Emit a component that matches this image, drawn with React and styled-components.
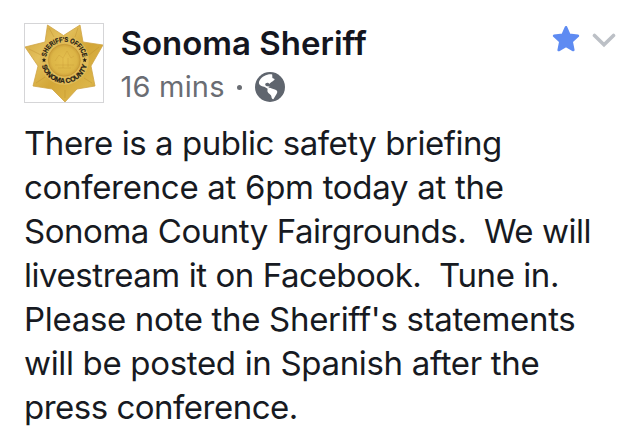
import styled, { createGlobalStyle } from "styled-components";

const lines = [
    { text: "There is a public safety briefing", spacing: -0.46 },
    { text: "conference at 6pm today at the", spacing: -0.3 },
    { text: "Sonoma County Fairgrounds.  We will", spacing: -0.46 },
    { text: "livestream it on Facebook.  Tune in.", spacing: -0.44 },
    { text: "Please note the Sheriff's statements", spacing: -0.32 },
    { text: "will be posted in Spanish after the", spacing: -0.33 },
    { text: "press conference.", spacing: -0.5 },
];

function SheriffBadge() {
    return (
        <svg width="78" height="78" viewBox="1 1 78 78">
            <defs>
                <linearGradient id="gold" x1="0" y1="0" x2="1" y2="1">
                    <stop offset="0" stopColor="#cfa23a" />
                    <stop offset="0.3" stopColor="#e3c05c" />
                    <stop offset="0.55" stopColor="#d3a637" />
                    <stop offset="0.8" stopColor="#dcb548" />
                    <stop offset="1" stopColor="#b98725" />
                </linearGradient>
                <radialGradient id="seal">
                    <stop offset="0" stopColor="#e5c04f" />
                    <stop offset="0.8" stopColor="#dcb546" />
                    <stop offset="1" stopColor="#cda03a" />
                </radialGradient>
                <path id="topArc" d="M21.7 37.5 A18.6 18.6 0 0 1 58.9 37.5" />
                <path id="bottomArc" d="M17.2 37 A23.1 23.1 0 0 0 63.4 37" />
            </defs>
            <path
                d="M23.5 2 L39.5 12.5 L56 2 L59 19 L79 22 L67 43 L71 63 L53 66 L41 79 L28 66 L9 63 L14 43 L1 24 L21 19 Z"
                fill="url(#gold)"
                stroke="#cfa446"
                strokeWidth="0.8"
                strokeLinejoin="round"
            />
            <path
                d="M25 5 L30 14 M54 5 L51 14 M75 24 L65 32 M68 60 L60 55 M41 75 L41 67 M12 60 L21 54 M5 26 L17 32"
                stroke="#b98a2c"
                strokeWidth="0.7"
                opacity="0.5"
            />
            <circle cx="40.3" cy="37.3" r="24.5" fill="#dfba58" />
            <circle cx="40.3" cy="37.3" r="16" fill="url(#seal)" stroke="#c4962f" strokeWidth="0.7" />
            <path
                d="M31 38 L35 32 L39 35 L43 28 L47 35 L50 33 M31 42 H50 M34 45 H47 M39 35 V45 M44 35 V44"
                fill="none"
                stroke="#bd8c2c"
                strokeWidth="0.8"
                opacity="0.3"
            />
            <BadgeText>
                <textPath href="#topArc" startOffset="3.5" textLength="51.5" lengthAdjust="spacingAndGlyphs">SHERIFF'S OFFICE</textPath>
            </BadgeText>
            <BadgeText>
                <textPath href="#bottomArc" startOffset="5.5" textLength="61.5" lengthAdjust="spacing">SONOMA COUNTY</textPath>
            </BadgeText>
            <path
                d="M20 34.6 L20.6 36.3 L22.3 36.4 L21 37.5 L21.4 39.2 L20 38.2 L18.6 39.2 L19 37.5 L17.7 36.4 L19.4 36.3 Z M60.7 34.6 L61.3 36.3 L63 36.4 L61.7 37.5 L62.1 39.2 L60.7 38.2 L59.3 39.2 L59.7 37.5 L58.4 36.4 L60.1 36.3 Z"
                fill="#1f1b14"
            />
        </svg>
    );
}

function GlobeIcon() {
    return (
        <svg width="30" height="30" viewBox="0 0 30 30">
            <circle cx="15" cy="15" r="15" fill="#5f656e" />
            <path
                d="M17.2 2.4 C12 1.8 7.2 4.3 4.6 8.4 C3.5 10.2 3.8 12 5.2 13.2 C6.8 14.6 9 14.3 10.6 15.4 L12.6 16.7 C13.6 15.4 15.5 15.8 16.8 16.5 L20.5 17.8 C22.6 18.6 22.7 20.2 21.7 21.8 L18.4 27.3 C17 27.4 16.5 25.8 16.4 24.5 C16.2 22.2 12.5 21.8 12.4 18.8 L12.6 16.7 L14.7 14.4 L11.9 14.3 C10.3 13.9 9.6 12.3 10.8 11.3 C12 10.3 13.6 10.6 14.4 12 C15.4 9.8 19.8 8.8 19.6 6.9 L17.4 6.1 Z"
                fill="#ffffff"
            />
        </svg>
    );
}

export default function App() {
    return (
        <>
            <GlobalStyle />
            <Post>
                <Header>
                    <Avatar>
                        <SheriffBadge />
                    </Avatar>
                    <HeaderText>
                        <Name>Sonoma Sheriff</Name>
                        <Meta>
                            <Time>16 mins</Time>
                            <Dot />
                            <GlobeIcon />
                        </Meta>
                    </HeaderText>
                    <Actions>
                        <svg width="28" height="28" viewBox="0 0 28 28">
                            <path
                                d="M14 2.3 L17.3 9.8 L25.9 10.8 L19.6 16.5 L21.3 25 L14 20.9 L6.7 25 L8.4 16.5 L2.1 10.8 L10.7 9.8 Z"
                                fill="#5e8bf2"
                                stroke="#5e8bf2"
                                strokeWidth="2.6"
                                strokeLinejoin="round"
                            />
                        </svg>
                        <svg width="24" height="15" viewBox="0 0 24 15">
                            <path d="M2.5 2.5 L12 11.7 L21.5 2.5" fill="none" stroke="#bcc0c6" strokeWidth="3.6" strokeLinecap="round" />
                        </svg>
                    </Actions>
                </Header>
                <Message>
                    {lines.map(({ text, spacing }) => (
                        <Line key={text} $spacing={spacing}>{text}</Line>
                    ))}
                </Message>
            </Post>
        </>
    );
}

const GlobalStyle = createGlobalStyle`
    body {
        margin: 0;
        background-color: #ffffff;
        font-family: Inter, "Liberation Sans", sans-serif;
    }
    svg {
        display: block;
        flex-shrink: 0;
    }
`
const Post = styled.article`
    box-sizing: border-box;
    width: 639px;
    height: 436px;
    padding: 23px 23px 0 24px;
    overflow: hidden;
`
const Header = styled.header`
    display: flex;
    height: 80px;
`
const Avatar = styled.div`
    box-sizing: border-box;
    width: 80px;
    height: 80px;
    border: 1px solid #d5d5d7;
`
const BadgeText = styled.text`
    font-family: "Liberation Sans", sans-serif;
    font-size: 7px;
    font-weight: 700;
    fill: #1f1b14;
    stroke: #1f1b14;
    stroke-width: 0.2px;
`
const HeaderText = styled.div`
    display: flex;
    flex-direction: column;
    flex: 1;
    padding-left: 16.5px;
`
const Name = styled.span`
    font-size: 33px;
    line-height: 40px;
    font-weight: 600;
    color: #14161f;
    white-space: nowrap;
`
const Meta = styled.div`
    display: flex;
    align-items: center;
    height: 46px;
    margin-top: 1px;
    color: #6a6d73;
`
const Time = styled.span`
    font-size: 29px;
    line-height: 46px;
    letter-spacing: 0.2px;
`
const Dot = styled.span`
    width: 5px;
    height: 5px;
    margin: 1px 13px 0 12px;
    border-radius: 50%;
    background-color: #6a6d73;
`
const Actions = styled.div`
    display: flex;
    align-items: flex-start;
    gap: 12px;
    padding-top: 2px;

    svg:last-child {
        margin-top: 8px;
    }
`
const Message = styled.div`
    padding-top: 18px;
    color: #171a22;
`
const Line = styled.p`
    margin: 0;
    font-size: 33px;
    line-height: 44px;
    letter-spacing: ${({$spacing}) => $spacing}px;
    white-space: pre;
`
